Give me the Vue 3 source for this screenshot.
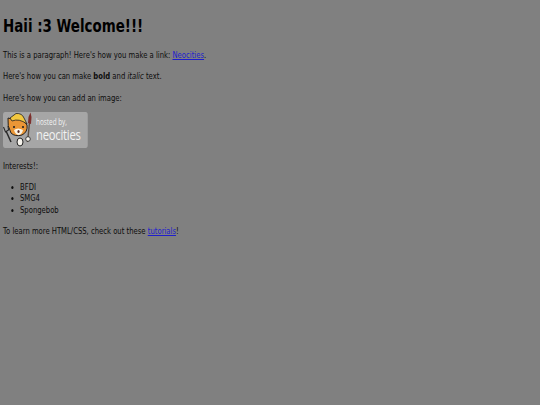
<template>
  <div class="page">
    <h1>Haii :3 Welcome!!!</h1>
    <p>This is a paragraph! Here's how you make a link: <a href="#">Neocities</a>.</p>
    <p>Here's how you can make <strong>bold</strong> and <em>italic</em> text.</p>
    <p>Here's how you can add an image:</p>
    <div class="badge">
      <svg class="cat" viewBox="0 0 30 36" preserveAspectRatio="none">
        <!-- wrench -->
        <path d="M3 19 L8 30" stroke="#2a2a2a" stroke-width="1.5" fill="none" />
        <path d="M0.5 15 L2.5 20 L5.5 18 L5 14" stroke="#2a2a2a" stroke-width="1.1" fill="none" />
        <!-- paintbrush -->
        <path d="M24.5 30 L26.5 11" stroke="#5f5040" stroke-width="1.4" fill="none" />
        <path d="M25 11 L25.5 5 L27.5 0.5 L28.5 5 L28 12 Z" fill="#7d2f2c" />
        <!-- foot and hand -->
        <ellipse cx="17" cy="30" rx="3" ry="4" fill="#f6f3ec" stroke="#222" stroke-width="1" />
        <circle cx="25" cy="27" r="2.3" fill="#f6f3ec" stroke="#222" stroke-width="0.8" />
        <!-- head -->
        <path d="M5 6 L9 7 Q15 5 20 8 L24 13 Q25 20 19 23 Q12 25 8 21 Q4 14 5 6 Z" fill="#ea9636" stroke="#222" stroke-width="1" />
        <path d="M7 6 L13 1.5 Q19 1 21 6 L24 12 Q16 6 9 9 Z" fill="#f2c840" stroke="#222" stroke-width="0.8" />
        <path d="M11 18 Q15 15 20 18 Q19 23 15 23 Q12 22 11 18 Z" fill="#fbf3e2" />
        <circle cx="11" cy="15" r="1.1" fill="#222" />
        <circle cx="20" cy="15" r="1.1" fill="#222" />
        <ellipse cx="15.5" cy="19.5" rx="1.1" ry="1.5" fill="#5a2a22" />
      </svg>
      <div class="badge-text">
        <span class="hosted">hosted by,</span>
        <span class="neo">neocities</span>
      </div>
    </div>
    <p>Interests!:</p>
    <ul>
      <li v-for="item in interests" :key="item">{{ item }}</li>
    </ul>
    <p>To learn more HTML/CSS, check out these <a href="#">tutorials</a>!</p>
  </div>
</template>

<script setup>
const interests = ['BFDI', 'SMG4', 'Spongebob']
</script>

<style>
html,
body {
  background: #808080;
  overflow: hidden;
}
</style>

<style scoped>
.page {
  width: 720px;
  min-height: 389px;
  padding: 8px 4px;
  box-sizing: border-box;
  transform: scaleX(0.75);
  transform-origin: 0 0;
  font-family: 'DejaVu Sans', Verdana, sans-serif;
  font-size: 9.15px;
  line-height: 11.3px;
  color: #0d0d0d;
}
h1 {
  margin: 7px 0 13px;
  font-size: 17.9px;
  line-height: 22px;
  color: #000;
}
p {
  margin: 10px 0;
}
a {
  color: #1e1ecc;
}
.badge {
  display: flex;
  width: 113.3px;
  height: 36px;
  margin: -2px 0 13px;
  background: #a6a6a6;
  border-radius: 3px;
  overflow: hidden;
}
.cat {
  flex: none;
  width: 40px;
  height: 36px;
}
.badge-text {
  display: flex;
  flex-direction: column;
  justify-content: center;
  padding-left: 4px;
  color: #f2f2f2;
  font-family: 'Open Sans', sans-serif;
}
.hosted {
  font-size: 8.5px;
  line-height: 9px;
}
.neo {
  font-size: 15px;
  line-height: 16px;
  letter-spacing: -0.3px;
}
ul {
  margin: 10px 0;
  padding-left: 22.7px;
}
</style>
